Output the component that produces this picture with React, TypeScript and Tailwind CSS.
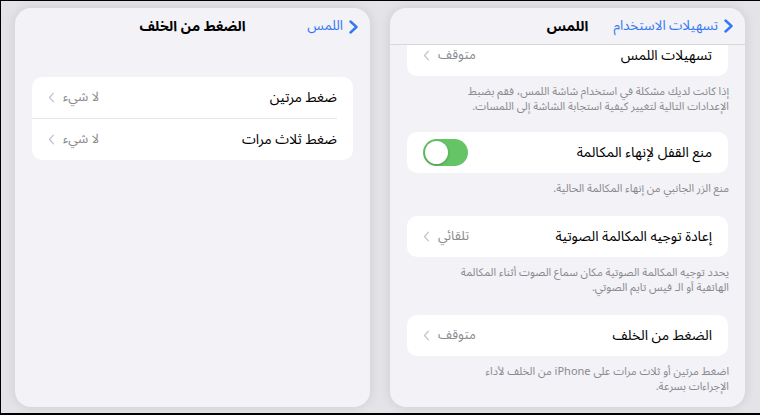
import React from 'react';

const font = { fontFamily: '"Noto Sans Arabic", "DejaVu Sans", "Noto Sans", sans-serif' };

function Chevron({ className }: { className: string }) {
  return (
    <svg viewBox="0 0 8 14" className={className} fill="none" stroke="currentColor" strokeLinecap="round" strokeLinejoin="round">
      <path d="M6.5 1.5 1.5 7l5 5.5" />
    </svg>
  );
}

function BackChevron() {
  return (
    <svg viewBox="0 0 9 14" className="w-[9px] h-[14px] text-[#3478f6]" fill="none" stroke="currentColor" strokeWidth={2.4} strokeLinecap="round" strokeLinejoin="round">
      <path d="M1.5 1.5 7.5 7l-6 5.5" />
    </svg>
  );
}

function Header({ back, title, divider }: { back: string; title: string; divider?: boolean }) {
  return (
    <div className={`relative h-[37px] shrink-0 flex items-center ${divider ? 'border-b border-[#d8d8dc]' : ''}`}>
      <div className="absolute right-[12px] top-0 h-full flex items-center gap-[6px]">
        <BackChevron />
        <span className="text-[13.5px] text-[#3478f6]">{back}</span>
      </div>
      <div className="w-full text-center text-[14px] font-bold text-black">{title}</div>
    </div>
  );
}

function ValueRow({ label, value }: { label: string; value: string }) {
  return (
    <div className="h-[41px] flex items-center justify-between px-4">
      <span className="text-[14px] text-black">{label}</span>
      <span className="flex items-center gap-[8px] text-[13px] text-[#8a8a8e]">
        {value}
        <Chevron className="w-[7px] h-[11px] text-[#c4c4c7] stroke-[1.6]" />
      </span>
    </div>
  );
}

function Footer({ children, last }: { children: React.ReactNode; last?: boolean }) {
  return (
    <div className={`px-4 pt-[8px] text-[11px] leading-[15px] text-[#8a8a8e] ${last ? 'mb-[18px]' : 'mb-[20px]'}`}>{children}</div>
  );
}

function Toggle() {
  return (
    <div className="w-[45px] h-[27px] rounded-full bg-[#65c466] p-[2px] flex justify-end">
      <div className="w-[23px] h-[23px] rounded-full bg-white shadow-[0_1px_3px_rgba(0,0,0,0.25)]" />
    </div>
  );
}

export default function App() {
  return (
    <div
      style={font}
      className="w-[760px] h-[415px] bg-[#e3e3e8] border-t border-l border-b-2 border-black flex gap-[20px] pl-[14px] pt-[7px] pb-[6px]"
    >
      <div dir="rtl" className="w-[355px] h-[399px] rounded-[16px] bg-[#f2f2f7] shadow-[0_0_12px_rgba(0,0,0,0.10)] flex flex-col overflow-hidden">
        <Header back="اللمس" title="الضغط من الخلف" />
        <div className="mx-[17px] mt-[32px] rounded-[10px] bg-white">
          <ValueRow label="ضغط مرتين" value="لا شيء" />
          <div className="mr-4 border-t border-[#e5e5ea]" />
          <ValueRow label="ضغط ثلاث مرات" value="لا شيء" />
        </div>
      </div>

      <div dir="rtl" className="w-[355px] h-[399px] rounded-[16px] bg-[#f2f2f7] shadow-[0_0_12px_rgba(0,0,0,0.10)] flex flex-col overflow-hidden">
        <Header back="تسهيلات الاستخدام" title="اللمس" divider />
        <div className="flex-1 overflow-hidden">
          <div className="-mt-[10px]">
            <div className="mx-[17px] rounded-[10px] bg-white">
              <ValueRow label="تسهيلات اللمس" value="متوقف" />
            </div>
            <Footer last>
              إذا كانت لديك مشكلة في استخدام شاشة اللمس، فقم بضبط
              <br />
              الإعدادات التالية لتغيير كيفية استجابة الشاشة إلى اللمسات.
            </Footer>

            <div className="mx-[17px] rounded-[10px] bg-white h-[41px] flex items-center justify-between px-4">
              <span className="text-[14px] text-black">منع القفل لإنهاء المكالمة</span>
              <Toggle />
            </div>
            <Footer>منع الزر الجانبي من إنهاء المكالمة الحالية.</Footer>

            <div className="mx-[17px] rounded-[10px] bg-white">
              <ValueRow label="إعادة توجيه المكالمة الصوتية" value="تلقائي" />
            </div>
            <Footer>
              يحدد توجيه المكالمة الصوتية مكان سماع الصوت أثناء المكالمة
              <br />
              الهاتفية أو الـ فيس تايم الصوتي.
            </Footer>

            <div className="mx-[17px] rounded-[10px] bg-white">
              <ValueRow label="الضغط من الخلف" value="متوقف" />
            </div>
            <Footer>
              اضغط مرتين أو ثلاث مرات على iPhone من الخلف لأداء
              <br />
              الإجراءات بسرعة.
            </Footer>
          </div>
        </div>
      </div>
    </div>
  );
}
